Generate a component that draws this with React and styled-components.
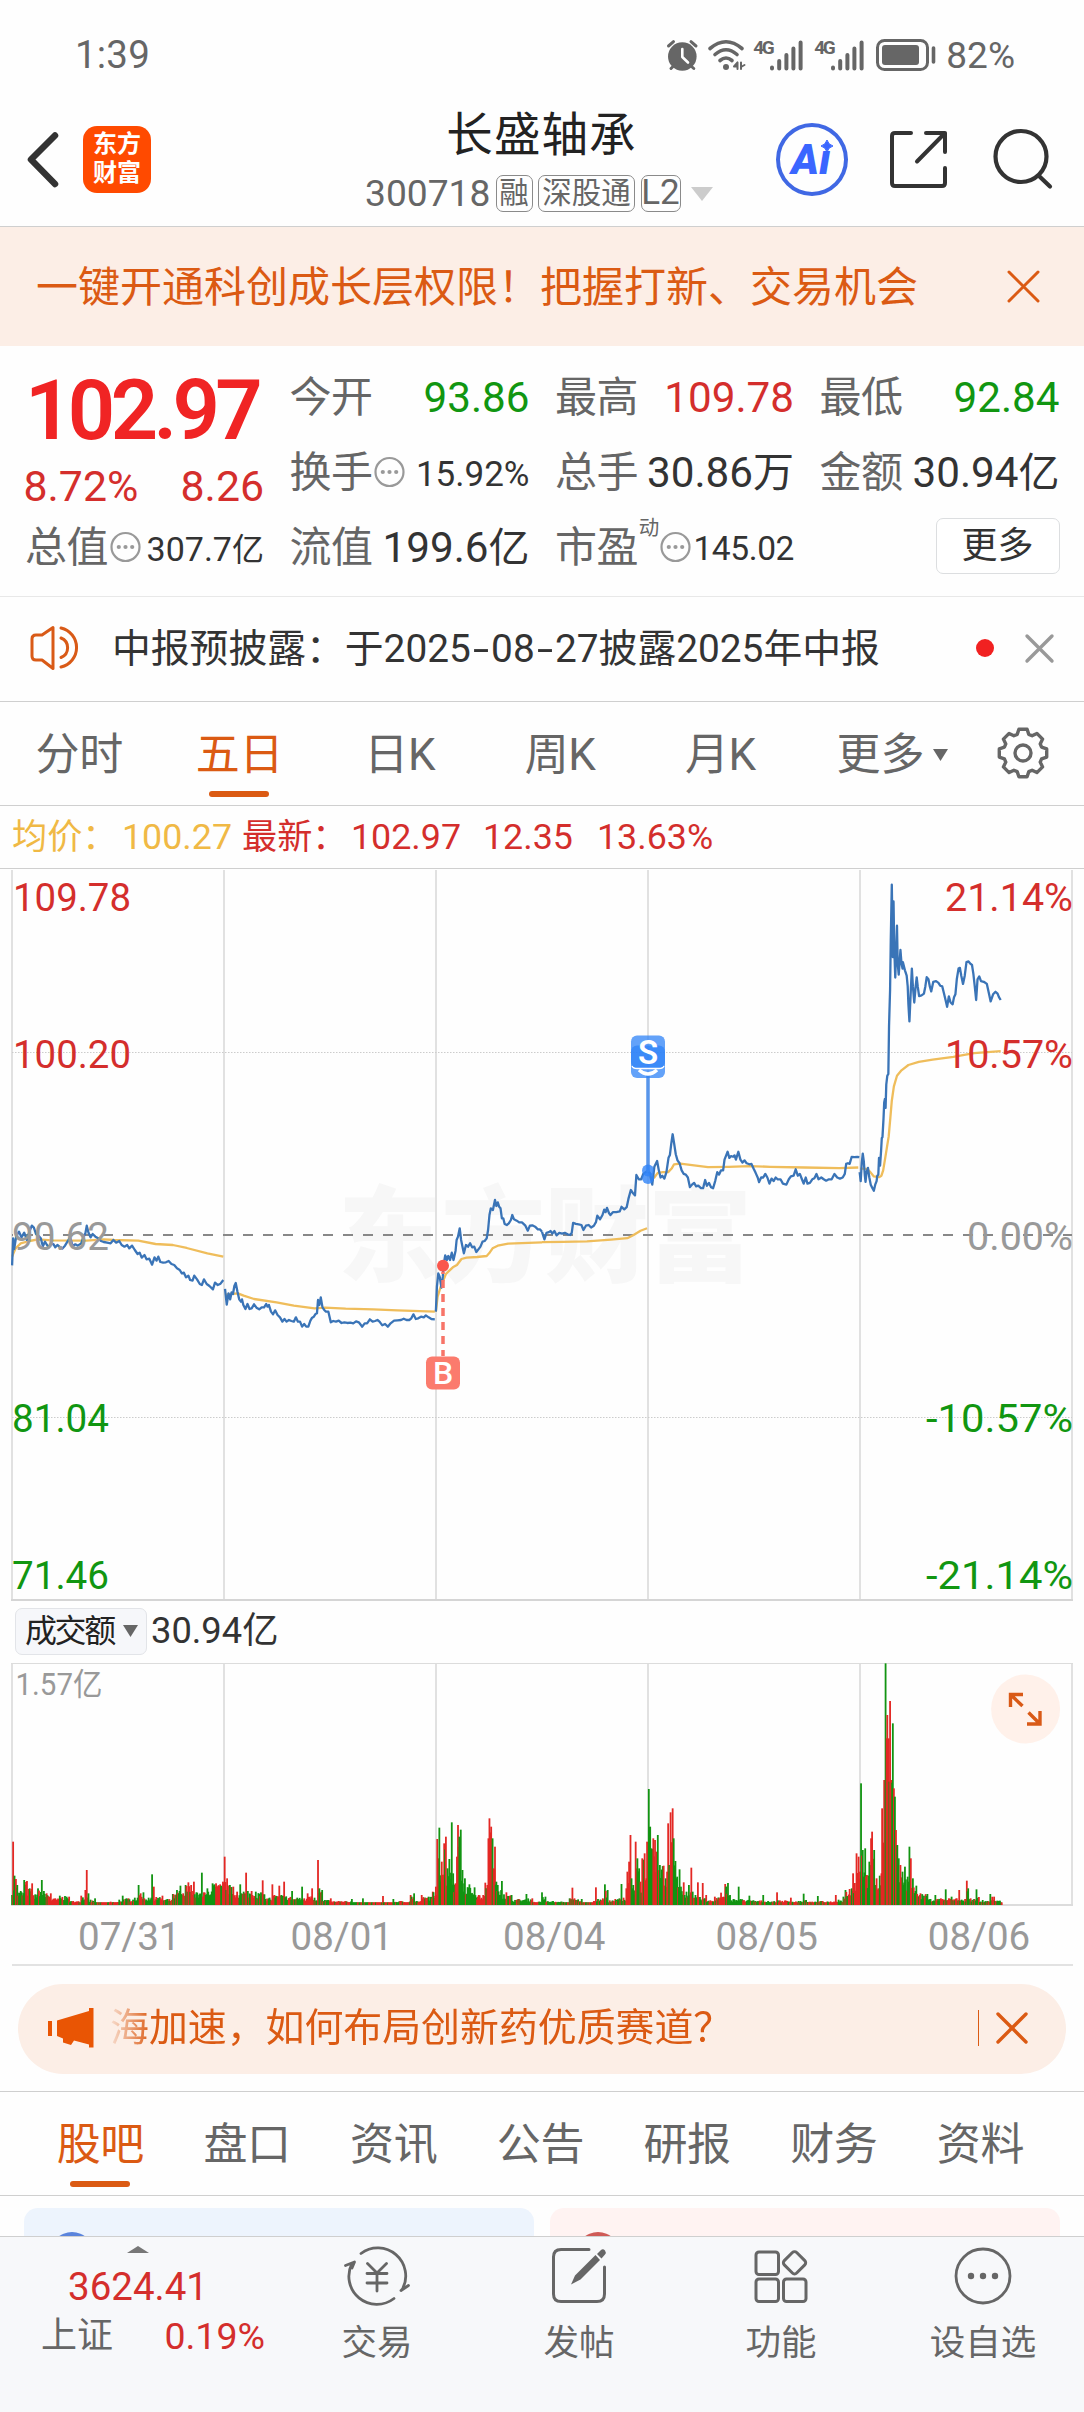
import React from "react";
import styled, { createGlobalStyle } from "styled-components";

const FONT = `Roboto, "Noto Sans CJK SC", sans-serif`;
const RED = "#d42e2c";
const GREEN = "#119611";
const ORANGE = "#db5a13";
const GRAY = "#666";

const Global = createGlobalStyle`
  * { box-sizing: border-box; }
  body { margin: 0; background: #fff; }
`;

const Page = styled.div`
  width: 1084px;
  height: 2412px;
  overflow: hidden;
  display: flex;
  flex-direction: column;
  background: #fefefe;
  font-family: ${FONT};
  color: #333;
  line-height: 1;
  white-space: nowrap;
`;

const Icon = styled.svg`
  display: block;
  flex: none;
  overflow: visible;
  fill: none;
  stroke-linecap: round;
  stroke-linejoin: round;
`;

/* ---------- status bar ---------- */
const StatusBar = styled.div`
  height: 72px;
  flex: none;
  display: flex;
  align-items: center;
  justify-content: space-between;
  padding: 38px 69px 0 75px;
  color: ${GRAY};
  font-size: 38.5px;
`;
const StatusIcons = styled.div`
  display: flex;
  align-items: center;
`;
const Clock = styled.span`
  letter-spacing: 0.2px;
`;
const Percent = styled.span`
  font-size: 37px;
  margin-left: 10px;
`;
const Network = styled.div`
  display: flex;
  align-items: flex-start;
  height: 30px;
  margin-left: ${(p) => p.$gap}px;
`;
const NetLabel = styled.span`
  font-size: 19px;
  font-weight: 700;
  width: 17px;
  letter-spacing: -2.4px;
  transform: translateY(-2px);
`;

/* ---------- header ---------- */
const Header = styled.header`
  height: 155px;
  flex: none;
  display: flex;
  align-items: flex-start;
  border-bottom: 1px solid #cfcfcf;
`;
const BackBox = styled.div`
  padding: 60px 0 0 27px;
`;
const Logo = styled.div`
  width: 68px;
  height: 67px;
  margin: 54px 0 0 24px;
  border-radius: 14px;
  background: #ff4a00;
  color: #fff;
  font-size: 24px;
  line-height: 29px;
  font-weight: 700;
  text-align: center;
  padding-top: 4px;
`;
const TitleBlock = styled.div`
  width: 353px;
  margin-left: 214px;
  padding-top: 37px;
  display: flex;
  flex-direction: column;
  align-items: center;
`;
const Title = styled.div`
  font-size: 46.5px;
  line-height: 52px;
  letter-spacing: 1.1px;
  font-weight: 400;
  color: #222;
`;
const SubTitle = styled.div`
  display: flex;
  align-items: center;
  height: 37px;
  margin-top: 14px;
  width: 353px;
  color: ${GRAY};
  font-size: 37.2px;
`;
const Code = styled.span`
  width: 130.5px;
`;
const Tag = styled.span`
  height: 37px;
  width: ${(p) => p.$w}px;
  margin-right: 5.5px;
  border: 1.5px solid #8a8a8a;
  border-radius: 7px;
  font-size: ${(p) => p.$size || 29.5}px;
  line-height: 34px;
  display: flex;
  justify-content: center;
`;
const CaretSlot = styled.span`
  margin-left: 5px;
`;
const HeaderIcons = styled.div`
  display: flex;
  margin: 51px 0 0 58px;
  align-items: flex-start;
`;
const AiBadge = styled.div`
  width: 72px;
  height: 73px;
  border: 4px solid #4068e4;
  border-radius: 50%;
  position: relative;
  display: flex;
  align-items: baseline;
  justify-content: center;
  color: #3a66ff;
  font-family: Roboto, sans-serif;
  font-style: italic;
  font-weight: 900;
  font-size: 42px;
  line-height: 66px;
  padding-right: 2px;
`;
const Spark = styled.svg`
  position: absolute;
  left: 41px;
  top: 13px;
`;

/* ---------- banner ---------- */
const Banner = styled.div`
  height: 119px;
  flex: none;
  display: flex;
  align-items: center;
  justify-content: space-between;
  padding: 0 44px 0 36px;
  background: #fceee6;
  color: ${ORANGE};
  font-size: 42px;
`;
const BannerText = styled.span`
  padding-top: 3px;
`;

/* ---------- quote ---------- */
const Quote = styled.section`
  height: 251px;
  flex: none;
  display: grid;
  grid-template-columns: 239px 240px 239px 240px;
  column-gap: 25.5px;
  padding: 13px 23px 0 25px;
  border-bottom: 1px solid #e8e8e8;
`;
const Column = styled.div`
  display: flex;
  flex-direction: column;
`;
const Price = styled.div`
  height: 100px;
  line-height: 104px;
  font-size: 83px;
  font-weight: 600;
  letter-spacing: -4.6px;
  color: #f02424;
`;
const ChangeRow = styled.div`
  height: 50px;
  line-height: 54px;
  display: flex;
  justify-content: space-between;
  font-size: 42.8px;
  margin-left: -1.5px;
  color: ${RED};
`;
const Cell = styled.div`
  height: 75px;
  padding-top: 3px;
  display: flex;
  align-items: center;
`;
const Label = styled.span`
  font-size: 42px;
  letter-spacing: -0.6px;
  color: ${GRAY};
`;
const Value = styled.span`
  margin-left: auto;
  font-size: ${(p) => (p.$small ? p.$size || 34 : 42.2)}px;
  letter-spacing: ${(p) => p.$ls || 0}px;
  padding-top: ${(p) => (p.$small ? 2 : 1)}px;
  color: ${(p) => p.$color || "#333"};
`;
const Unit = styled.span`
  font-size: ${(p) => p.$size}px;
  letter-spacing: 0;
`;
const Sup = styled.span`
  font-size: 20.5px;
  color: ${GRAY};
  align-self: flex-start;
  margin: 6px -1px 0 1px;
`;
const MoreButton = styled.button`
  margin: 9px 0 0 auto;
  width: 124px;
  height: 56px;
  border: 1.5px solid #dcdee0;
  border-radius: 7px;
  background: #fff;
  color: #333;
  font: 36px/48px ${FONT};
  padding: 0 0 1px;
`;

/* ---------- notice ---------- */
const Notice = styled.div`
  height: 105px;
  flex: none;
  display: flex;
  align-items: center;
  padding: 0 30px 2px 30px;
  border-bottom: 1px solid #cfcfcf;
  font-size: 38.8px;
`;
const NoticeText = styled.span`
  margin-left: 31px;
  padding-top: 2px;
`;
const Dash = styled.span`
  display: inline-block;
  width: 20.3px;
  text-align: center;
  transform: scaleX(1.5);
`;
const RedDot = styled.span`
  width: 18px;
  height: 18px;
  margin-left: auto;
  margin-right: 31px;
  border-radius: 50%;
  background: #f12121;
`;

/* ---------- tabs ---------- */
const PeriodTabs = styled.nav`
  height: 104px;
  flex: none;
  display: flex;
  border-bottom: 1px solid #cfcfcf;
`;
const SectionTabs = styled(PeriodTabs)`
  padding: 0 28px 0 28px;
`;
const Tab = styled.div`
  width: ${(p) => p.$w || 160.3}px;
  flex: none;
  display: flex;
  flex-direction: column;
  align-items: center;
  padding-top: 31px;
  font-size: 44px;
  line-height: 44px;
  letter-spacing: -0.4px;
  color: ${(p) => (p.$active ? ORANGE : GRAY)};
  &:first-child { margin-left: -1px; }
`;
const Underline = styled.span`
  width: 60px;
  height: 6px;
  margin-top: 14px;
  border-radius: 3px;
  background: ${ORANGE};
`;
const MoreTab = styled.div`
  width: 198px;
  display: flex;
  align-items: center;
  gap: 9px;
  padding: 2px 0 0 36px;
  font-size: 44px;
  color: ${GRAY};
`;

/* ---------- legend ---------- */
const Legend = styled.div`
  height: 63px;
  flex: none;
  display: flex;
  align-items: center;
  padding: 2px 0 0 12px;
  border-bottom: 1px solid #cfcfcf;
`;
const LegendItem = styled.span`
  width: ${(p) => p.$w}px;
  color: ${(p) => p.$color || RED};
  font-size: ${(p) => p.$size || 35.8}px;
`;

/* ---------- charts ---------- */
const Chart = styled.svg`
  display: block;
  flex: none;
  font-family: ${FONT};
`;
const VolumeHeader = styled.div`
  height: 62px;
  flex: none;
  display: flex;
  align-items: center;
  padding: 0 0 1px 15px;
  font-size: 36.3px;
`;
const Chip = styled.div`
  width: 132px;
  height: 47px;
  margin-right: 4px;
  display: flex;
  align-items: center;
  justify-content: space-between;
  padding: 0 8px 1px 9px;
  border: 1px solid #e2e4e8;
  border-radius: 7px;
  background: #f6f7fa;
  color: #222;
  font-size: 32px;
  letter-spacing: -2.4px;
`;
const Dates = styled.div`
  height: 60px;
  flex: none;
  margin: 0 11px 0 12px;
  padding-left: 11px;
  display: flex;
  border-bottom: 2px solid #e2e2e2;
  color: #999;
  font-size: 38.5px;
`;
const DateLabel = styled.span`
  width: 212.5px;
  flex: none;
  text-align: center;
  line-height: 61px;
  &:last-child { width: 212px; }
`;

/* ---------- promo ---------- */
const PromoArea = styled.div`
  height: 126px;
  flex: none;
  padding: 18px 18px 0;
  border-bottom: 1px solid #cfcfcf;
`;
const Promo = styled.div`
  height: 90px;
  border-radius: 45px;
  background: #fceee6;
  display: flex;
  align-items: center;
  padding: 0 38px 2px 30px;
  color: ${ORANGE};
  font-size: 38.9px;
`;
const Marquee = styled.span`
  margin-left: 16px;
  padding-top: 1px;
  -webkit-mask-image: linear-gradient(90deg, rgba(0, 0, 0, 0.1), #000 42px);
  mask-image: linear-gradient(90deg, rgba(0, 0, 0, 0.1), #000 42px);
`;
const Divider = styled.span`
  width: 1.5px;
  height: 36px;
  margin-left: auto;
  margin-right: 17px;
  background: ${ORANGE};
`;

/* ---------- cards ---------- */
const Cards = styled.div`
  height: 40px;
  flex: none;
  display: flex;
  gap: 16px;
  padding: 12px 24px 0;
  overflow: hidden;
`;
const Card = styled.div`
  width: 510px;
  height: 100px;
  border-radius: 14px;
  background: ${(p) => p.$bg};
  padding: 24px 0 0 26px;
  display: flex;
  align-items: flex-start;
`;
const Face = styled.span`
  width: 44px;
  height: 44px;
  border-radius: 50%;
  background: ${(p) => p.$bg};
`;

/* ---------- bottom bar ---------- */
const BottomBar = styled.footer`
  height: 176px;
  flex: none;
  display: flex;
  background: #f7f8fa;
  border-top: 1px solid #cfcfcf;
  color: ${GRAY};
`;
const IndexBox = styled.div`
  width: 276px;
  display: flex;
  flex-direction: column;
  align-items: center;
  padding-top: 9px;
`;
const IndexValue = styled.div`
  margin-top: 15px;
  font-size: 38.5px;
  line-height: 38px;
  color: ${RED};
`;
const IndexRow = styled.div`
  margin: 10px 0 0 41px;
  width: 224px;
  align-self: flex-start;
  display: flex;
  justify-content: space-between;
  align-items: center;
  font-size: 36px;
  line-height: 40px;
`;
const IndexPct = styled.span`
  color: ${RED};
  font-size: 37.5px;
`;
const Action = styled.div`
  width: 202px;
  display: flex;
  flex-direction: column;
  align-items: center;
  padding-top: 9px;
  font-size: 35.5px;
  line-height: 36px;
`;
const ActionLabel = styled.span`
  margin-top: 19px;
`;

/* ---------- icons ---------- */
const Cross = ({ size, color, w }) => (
  <Icon width={size} height={size} viewBox={`0 0 ${size} ${size}`} stroke={color} strokeWidth={w}>
    <path d={`M2 2L${size - 2} ${size - 2}M${size - 2} 2L2 ${size - 2}`} />
  </Icon>
);
const InfoIcon = styled(Icon)`
  margin-left: 2px;
`;
const Info = () => (
  <InfoIcon width="31" height="31" viewBox="0 0 31 31" stroke="#999" strokeWidth="2.2">
    <circle cx="15.5" cy="14" r="14" />
    <g fill="#999" stroke="none">
      <circle cx="8.8" cy="14" r="2.1" />
      <circle cx="15.5" cy="14" r="2.1" />
      <circle cx="22.2" cy="14" r="2.1" />
    </g>
  </InfoIcon>
);
const Signal = () => (
  <Icon width="33" height="31" viewBox="0 0 33 31" stroke="#666" strokeWidth="4">
    <path d="M2 27.5V28.5M9.2 21V28.5M16.4 15V28.5M23.4 8.5V28.5M30.6 2.5V28.5" />
  </Icon>
);
const Caret = ({ w, h, color, up }) => (
  <Icon width={w} height={h} viewBox="0 0 10 10" preserveAspectRatio="none">
    <path fill={color} d={up ? "M0 10L5 0L10 10Z" : "M0 0H10L5 10Z"} />
  </Icon>
);

const WifiIcon = styled(Icon)`
  margin-left: 9px;
`;
const BatteryIcon = styled(Icon)`
  margin-left: 12px;
`;
const ShareIcon = styled(Icon)`
  margin: 8px 0 0 42px;
`;
const SearchIcon = styled(Icon)`
  margin: 6px 0 0 45px;
`;
const GearIcon = styled(Icon)`
  margin-top: 26px;
`;

const gearPath = (() => {
  const pts = [];
  for (let i = 0; i < 8; i++) {
    const a = (i * Math.PI) / 4;
    [[-0.3, 19.5], [-0.17, 24], [0.17, 24], [0.3, 19.5]].forEach(([d, r]) => {
      pts.push(`${(25 + r * Math.sin(a + d)).toFixed(1)} ${(25 - r * Math.cos(a + d)).toFixed(1)}`);
    });
  }
  return `M${pts.join("L")}Z`;
})();

/* ---------- chart data ---------- */
const priceLeft = [
  "35,406 38,325 41,357 47,318 55,305 62,322 70,308 78,330 85,305 92,287 98,293 104,312 112,318 118,325 124,349 130,335 136,345 141,352 148,340 155,343 160,352 166,345 172,350 180,356 188,347 195,335 203,322 210,348 218,343 225,347 235,340 240,325 247,310 251,287 256,308 262,322 268,312 276,320 284,325 292,333 300,336 310,338 320,340 328,330 336,338 345,333 352,345 360,350 368,345 374,355 382,347 390,360 398,372 404,368 410,383 418,375 424,388 432,386 440,404 447,382 453,392 458,380 464,396 472,398 480,397 488,393 496,402 504,405 512,415 520,420 526,430 532,428 538,442 545,437 550,450 557,452 562,437 570,448 578,462 584,465 590,448 598,462 606,468 616,478 622,458 630,465 638,461 646,450",
  "651,477 656,524 661,490 666,508 670,487 674,492 678,468 682,459 687,485 692,508 697,515 700,508 704,525 710,537 716,522 722,537 728,535 735,523 742,533 750,538 757,532 764,532 770,522 774,530 778,525 784,545 790,553 796,541 803,555 810,562 817,575 823,567 829,575 836,570 843,573 850,575 856,562 862,575 868,575 874,590 880,582 886,590 892,590 898,572 903,563 908,560 913,552 917,550 920,510 924,525 928,502 933,532 938,540 943,545 950,545 957,577 964,573 972,575 980,572 988,579 996,577 1005,579 1014,578 1022,580 1030,574 1038,577 1048,590 1055,580 1062,580 1070,568 1078,575 1085,573 1092,570 1098,575 1106,586 1114,582 1122,590 1130,580 1140,572 1150,571 1160,570 1168,566 1176,570 1184,570 1190,565 1196,553 1203,567 1210,565 1218,560 1226,562 1232,556 1240,562 1248,567 1258,568",
  "1261,545 1264,470 1268,430 1272,440 1277,473 1281,440 1284,400 1288,376 1293,390 1297,378 1302,390 1307,368 1312,390 1318,362 1321,330 1325,320 1330,295 1334,330 1338,350 1342,370 1348,345 1354,350 1360,340 1366,352 1372,350 1378,366 1384,358 1390,350 1396,335 1402,333 1408,325 1412,300 1416,255 1420,235 1426,240 1432,210 1436,228 1440,217 1444,230 1448,235 1452,265 1456,265 1460,282 1466,285 1472,280 1478,270 1482,255 1487,268 1495,272 1502,277 1510,277 1520,287 1527,302 1533,287 1540,286 1548,290 1556,298 1562,298 1568,305",
];
const priceRight = [
  "0,1097 7,1118 13,1100 20,1098 25,1095 30,1102 36,1095 42,1107 50,1100 58,1102 66,1100 74,1104 82,1106 86,1100 90,1072 98,1075 106,1076 114,1078 120,1092 127,1080 135,1078 142,1085 150,1080 156,1070 160,1052 168,1062 175,1050 180,1035 184,1042 188,1030 194,1045 198,1050 205,1042 215,1042 225,1040 230,1027 238,1034 245,1028 250,1005 257,980 264,990 269,995 273,938 280,950 287,950 293,935 300,930 307,925 313,935 319,965 325,915 333,899 338,925 343,945 348,940 354,948 360,930 366,890 370,882 374,850 378,824 382,848 387,880 392,897 398,905 404,925 410,935 416,937 422,945 428,972 434,965 440,960 446,970 452,968 460,975 466,975 472,952 477,968 483,960 489,972 495,975 501,955 507,930 512,937 518,925 524,925 528,895 532,885 537,873 542,890 547,885 553,887 557,883 561,895 568,873 574,895 580,903 586,897 592,905 600,908 606,907 612,920 618,932 624,945 628,958 634,945 640,945 646,935 652,945 658,962 664,948 670,955 676,945 682,950 690,950 697,962 707,965 714,950 720,942 728,940 734,922 740,940 746,935 752,950 757,962 763,945 768,962 775,960 782,950 788,947 794,935 800,950 808,945 815,950 822,954 830,950 838,950 846,935 854,945 862,948 870,945 876,935 880,907 885,905 890,907 896,887 904,888 912,887 918,888",
  "919,930 922,955 925,905 928,878 931,900 934,940 936,957 939,930 943,918 947,945 951,965 956,975 960,982 964,965 968,955 970,940 973,937 975,890 978,912 981,870 983,835 985,832 988,780 990,735 992,725 994,750 996,685 999,660 1002,655 1004,520 1007,420 1009,280 1012,125 1015,328 1017,172 1019,300 1022,385 1025,300 1027,240 1029,345 1032,377 1037,308 1040,345 1043,360 1044,342 1050,365 1055,380 1058,410 1060,460 1063,508 1067,420 1070,360 1073,410 1077,455 1081,410 1084,385 1087,410 1091,437 1098,435 1105,430 1109,410 1113,384 1118,390 1122,410 1126,424 1132,397 1140,395 1147,400 1152,408 1158,410 1163,430 1168,450 1172,467 1177,438 1182,455 1188,460 1192,440 1196,432 1200,390 1205,360 1209,358 1213,380 1218,403 1223,380 1228,342 1234,340 1240,347 1244,350 1248,375 1252,410 1256,448 1260,390 1265,382 1270,395 1278,397 1287,403 1293,430 1298,452 1305,432 1312,425 1318,430 1322,440 1327,448",
];
const avgLeft = [
  "35,380 45,355 60,340 85,333 110,328 150,331 250,332 300,328 330,330 400,332 450,342 500,345 540,354 600,370 646,380",
  "651,495 668,492 688,490 705,497 735,507 800,517 850,527 910,535 940,533 1000,536 1080,538 1150,541 1258,545",
  "1261,545 1266,500 1275,470 1283,450 1290,432 1300,422 1310,412 1322,405 1335,387 1350,383 1380,381 1408,378 1415,370 1425,355 1440,347 1470,341 1568,337",
];
const avgRight = [
  "0,1126 60,1125 130,1124 200,1119 247,1115 265,1106 285,1094 304,1087",
  "309,930 315,950 325,945 335,932 350,930 365,930 375,920 382,908 400,906 440,911 480,916 540,915 600,913 660,915 760,917 860,919 915,917",
  "920,920 940,921 950,930 960,942 975,944 982,940 987,925 993,890 1003,830 1008,775 1012,730 1018,690 1027,660 1040,645 1060,630 1090,621 1130,615 1190,607 1250,597 1327,591",
];

// Turnover anchors: position:height, followed by r (rise) or g (fall)
const turnover = `35:30g 38:190r 42:88g 46:78r 50:60g 60:42g 70:75g 78:72r 86:50g 93:65r 102:32g 110:50g 121:75g 127:42g 135:35r 147:35r 160:20r 173:28g 188:27g 200:25r 212:12r 235:28r 247:45r 251:105r 256:35g 262:16g 275:20g 290:8r 320:10r 345:16g 355:28g 372:20r 390:22g 401:60g 407:35r 415:38g 430:22g 440:92g 445:55r 452:24r 470:28r 485:18g 500:33g 512:45g 522:58g 530:35r 537:60g 545:68r 553:60r 561:70r 568:38g 584:97g 590:38r 600:50g 615:65g 625:65r 637:62r 645:70r 650:145r 657:80r 665:60g 675:55r 686:40r 695:62g 705:40g 712:97r 717:42g 728:42r 740:40g 755:38g 760:74r 765:32g 780:22g 788:62r 794:30r 808:58r 814:30g 822:70r 828:26g 845:42g 860:22g 874:55g 880:20r 890:35r 903:50r 910:22g 920:135r 924:50g 932:45g 940:15g 957:20r 980:12r 1018:18g 1035:8r 1050:20g 1080:8r 1108:27r 1120:8r 1138:18g 1160:12r 1188:30r 1198:35g 1205:12g 1220:30r 1240:25g 1252:40r 1261:55r 1265:198r 1268:140r 1271:232g 1278:130r 1285:185r 1290:205r 1295:110g 1300:138g 1307:248g 1311:95g 1318:65r 1322:145r 1325:240r 1329:205g 1333:226g 1338:105g 1345:80g 1358:62g 1373:53g 1385:30r 1398:30r 1404:67r 1410:60r 1413:200r 1416:260r 1421:235r 1425:200g 1428:110r 1432:175r 1436:70g 1440:60g 1452:72g 1458:32g 1465:38r 1480:30g 1500:18g 1523:33g 1540:20r 1560:10g 1568:38g 1578:25g 1600:12g 1625:10g 1648:20g 1656:52r 1662:20r 1683:18g 1700:8r 1718:12r 1724:53r 1730:18g 1744:20r 1750:62g 1758:45g 1764:14r 1780:18r 1792:20g 1798:63g 1804:22r 1812:50r 1815:100r 1820:130r 1824:210r 1827:80g 1832:60g 1839:190r 1844:140g 1849:110g 1853:70r 1858:140r 1865:155r 1870:80r 1872:190r 1877:348g 1881:235g 1885:170g 1890:200r 1895:195r 1900:160r 1903:210g 1909:120g 1920:118r 1926:80g 1930:100r 1933:245r 1936:120g 1940:278r 1946:290r 1949:200g 1954:132g 1959:85g 1966:107g 1970:55g 1978:68r 1986:40g 1993:60g 1998:38r 2000:112r 2004:40g 2012:30g 2019:68r 2025:24g 2033:66r 2038:20g 2043:30r 2055:14r 2068:25r 2086:37r 2093:25r 2098:63r 2106:66g 2112:30g 2122:18g 2137:55g 2142:18g 2168:28g 2180:14g 2208:30g 2222:12g 2248:38r 2256:14r 2288:22r 2310:12g 2325:34g 2332:15g 2350:10r 2366:27g 2380:12r 2418:30r 2426:16g 2440:25g 2446:45g 2458:48r 2464:50g 2468:95r 2473:66r 2478:155r 2484:145r 2488:100r 2491:365g 2496:165g 2503:170g 2508:90r 2515:130g 2520:200r 2523:220r 2529:165g 2532:60g 2536:80r 2541:50r 2545:88g 2550:95r 2552:290r 2558:375r 2562:725g 2565:500r 2567:570r 2571:500r 2575:612r 2579:375r 2583:545g 2586:350r 2589:325g 2592:225r 2596:180g 2600:140g 2605:120r 2611:100g 2618:115g 2626:85g 2629:70g 2631:175g 2635:140r 2641:80g 2651:58g 2663:35r 2683:33g 2692:18g 2706:30g 2722:20r 2736:47g 2745:20r 2753:25g 2768:20r 2775:45r 2782:16g 2792:18r 2797:73r 2801:50g 2808:20r 2818:18g 2825:47g 2832:24r 2843:15g 2857:12g 2865:33g 2876:25r 2885:13g 2893:13g 2898:8r`
  .split(" ")
  .map((s) => {
    const m = s.match(/^(\d+):(\d+)([rg])$/);
    return [+m[1], +m[2], m[3]];
  });

const bars = (() => {
  let seed = 7;
  const rnd = () => {
    seed = (seed * 16807) % 2147483647;
    return seed / 2147483647;
  };
  const out = [];
  for (let i = 0; i < turnover.length; i++) {
    const [x, h, c] = turnover[i];
    out.push([x, h, c]);
    const next = turnover[i + 1];
    if (!next) break;
    const low = Math.min(h, next[1]);
    const n = Math.round((next[0] - x) / 2.5);
    for (let k = 1; k < n; k++) {
      out.push([x + (k * (next[0] - x)) / n, Math.max(8, low * (0.5 + 0.5 * rnd())), rnd() < 0.7 ? c : next[2] === c ? (c === "r" ? "g" : "r") : next[2]]);
    }
  }
  return out;
})();

const gridX = [12, 224, 436, 648, 860, 1072];

const SeriesLine = ({ sets, left, color }) => (
  <g
    transform={left ? "translate(0 1130) scale(0.34566 0.33333)" : "translate(542 840) scale(0.34566 0.35714)"}
    fill="none"
    stroke={color}
    strokeWidth="2.3"
    strokeLinejoin="round"
  >
    {sets.map((p) => (
      <polyline key={p.slice(0, 12)} points={p} vectorEffect="non-scaling-stroke" />
    ))}
  </g>
);

const AxisText = ({ x, y, color, anchor, len, children }) => (
  <text x={x} y={y + 14} fill={color} fontSize="39.5" textAnchor={anchor || "start"} textLength={len} lengthAdjust="spacingAndGlyphs">
    {children}
  </text>
);

const PriceChart = () => (
  <Chart width="1084" height="732" viewBox="0 869 1084 732">
    <text x="338" y="1274" fontSize="104" fontWeight="900" fill="#f7f7f7" textLength="414">
      东方财富
    </text>
    <g stroke="#e1e1e1" strokeWidth="2">
      {gridX.map((x) => (
        <path key={x} d={`M${x} 870V1600`} />
      ))}
    </g>
    <path d="M11 1600H1073" stroke="#d5d5d5" strokeWidth="2" />
    <path d="M12 1052.5H1072M12 1417.5H1072" stroke="#ccc" strokeWidth="1" strokeDasharray="1.5 1.5" />
    <path d="M12 1235H1072" stroke="#888" strokeWidth="2" strokeDasharray="10 10" strokeDashoffset="9" />
    <SeriesLine sets={avgLeft} left color="#efbd5b" />
    <SeriesLine sets={avgRight} color="#efbd5b" />
    <SeriesLine sets={priceLeft} left color="#3a74b7" />
    <SeriesLine sets={priceRight} color="#3a74b7" />

    <path d="M443 1272V1356" stroke="#f77468" strokeWidth="3.5" strokeDasharray="8 6" strokeDashoffset="-8" />
    <circle cx="443" cy="1265.7" r="6" fill="#fa564c" />
    <rect x="426" y="1356.5" width="34" height="33" rx="6" fill="#fb7b6d" />
    <text x="443" y="1384" fontSize="32" fontWeight="500" fill="#fff" textAnchor="middle">B</text>

    <path d="M648 1074V1172" stroke="#5795ea" strokeWidth="3.5" />
    <circle cx="648" cy="1170.5" r="6" fill="#2f83f7" fillOpacity="0.8" />
    <circle cx="648" cy="1178" r="6" fill="#2f83f7" fillOpacity="0.8" />
    <rect x="631" y="1045.5" width="34" height="32.5" rx="6" fill="#2f83f7" fillOpacity="0.75" />
    <path d="M639 1070Q648 1078 657 1070" stroke="#fff" strokeWidth="3.5" fill="none" />
    <rect x="631" y="1035.5" width="34" height="32.5" rx="6" fill="#2f83f7" fillOpacity="0.75" />
    <path d="M632 1066Q633 1068.5 637 1068.5H659Q663 1068.5 664 1066" stroke="#fff" strokeWidth="1.3" fill="none" />
    <text x="648" y="1063.5" fontSize="33" fontWeight="600" fill="#fff" textAnchor="middle">S</text>

    <AxisText x="13" y={896.7} color={RED} len="118">109.78</AxisText>
    <AxisText x="13" y={1053.7} color={RED} len="118">100.20</AxisText>
    <AxisText x="12" y={1235.7} color="#999" len="97">90.62</AxisText>
    <AxisText x="12" y={1418} color={GREEN} len="97">81.04</AxisText>
    <AxisText x="12" y={1574.5} color={GREEN} len="97">71.46</AxisText>
    <AxisText x="1073" y={897} color={RED} anchor="end" len="128">21.14%</AxisText>
    <AxisText x="1073" y={1053.7} color={RED} anchor="end" len="128">10.57%</AxisText>
    <AxisText x="1073" y={1235.7} color="#999" anchor="end" len="106">0.00%</AxisText>
    <AxisText x="1073" y={1418} color={GREEN} anchor="end" len="147">-10.57%</AxisText>
    <AxisText x="1073" y={1574.5} color={GREEN} anchor="end" len="147">-21.14%</AxisText>
  </Chart>
);

const VolumeChart = () => (
  <Chart width="1084" height="243" viewBox="0 1663 1084 243">
    <g stroke="#e1e1e1" strokeWidth="2">
      {gridX.map((x) => (
        <path key={x} d={`M${x} 1663V1905`} />
      ))}
    </g>
    <path d="M11 1663.5H1073" stroke="#dcdcdc" strokeWidth="1" />
    <path d="M11 1905H1073" stroke="#dcdcdc" strokeWidth="2" />
    <text x="15.5" y="1695" fontSize="31" fill="#999" textLength="87" lengthAdjust="spacingAndGlyphs">1.57亿</text>
    {bars.map(([x, h, c], i) => (
      <rect key={i} x={x / 2.893 - 0.9} y={1905 - h / 3} width="1.8" height={h / 3} fill={c === "r" ? "#e32824" : "#129412"} />
    ))}
    <circle cx="1025.6" cy="1709" r="34.5" fill="#fff1ea" />
    <path
      d="M1010.5 1707V1694.5H1023M1010.5 1694.5L1022.5 1706M1040 1711V1724H1027M1040 1724L1028.5 1712.5"
      stroke="#d95a17"
      strokeWidth="3.4"
      fill="none"
    />
  </Chart>
);

const sections = ["股吧", "盘口", "资讯", "公告", "研报", "财务", "资料"];
const periods = ["分时", "五日", "日K", "周K", "月K"];
const dates = ["07/31", "08/01", "08/04", "08/05", "08/06"];

export default function App() {
  return (
    <Page>
      <Global />
      <StatusBar>
        <Clock>1:39</Clock>
        <StatusIcons>
          <Icon width="33" height="31" viewBox="0 0 33 31" stroke="#666" strokeWidth="3">
            <circle cx="16.3" cy="16.5" r="14.3" fill="#666" stroke="none" />
            <path d="M2.5 6L7.5 1.7M30 6L25 1.7M5 28.5L7.5 26M27.8 28.5L25 26" />
            <path d="M16.3 9V17L22 22.5" stroke="#fff" strokeWidth="2.6" />
          </Icon>
          <WifiIcon width="38" height="31" viewBox="0 0 38 31" stroke="#666" strokeWidth="3.6">
            <path d="M2 8.5Q18 -5 34 8.5M7 14.5Q18 5 29 14.5M12 20.5Q18 15.5 24 20.5" />
            <circle cx="18" cy="27" r="3" fill="#666" stroke="none" />
            <path d="M29.5 22.5V29M29.5 22.5L26 26.5H29M33 29V22.5M33 27L36.5 25" strokeWidth="2" />
          </WifiIcon>
          <Network $gap={7}>
            <NetLabel>4G</NetLabel>
            <Signal />
          </Network>
          <Network $gap={11}>
            <NetLabel>4G</NetLabel>
            <Signal />
          </Network>
          <BatteryIcon width="60" height="32" viewBox="0 0 60 32" stroke="#666" strokeWidth="3">
            <rect x="1.5" y="1.5" width="50" height="29" rx="7" />
            <rect x="6" y="6" width="37" height="20" rx="3" fill="#666" stroke="none" />
            <path d="M57.5 9V23" strokeWidth="3.6" />
          </BatteryIcon>
          <Percent>82%</Percent>
        </StatusIcons>
      </StatusBar>

      <Header>
        <BackBox>
          <Icon width="32" height="56" viewBox="0 0 32 56" stroke="#333" strokeWidth="6.5">
            <path d="M28 3.5L4 27.5L28 52" />
          </Icon>
        </BackBox>
        <Logo>
          东方
          <br />
          财富
        </Logo>
        <TitleBlock>
          <Title>长盛轴承</Title>
          <SubTitle>
            <Code>300718</Code>
            <Tag $w={37}>融</Tag>
            <Tag $w={97}>深股通</Tag>
            <Tag $w={40} $size={35}>L2</Tag>
            <CaretSlot>
              <Caret w={22} h={14} color="#ccc" />
            </CaretSlot>
          </SubTitle>
        </TitleBlock>
        <HeaderIcons>
          <AiBadge>
            Aı
            <Spark width="12" height="12" viewBox="0 0 12 12">
              <path d="M6 0Q7.3 4.7 12 6Q7.3 7.3 6 12Q4.7 7.3 0 6Q4.7 4.7 6 0Z" fill="#3a66ff" stroke="#3a66ff" />
            </Spark>
          </AiBadge>
          <ShareIcon width="58" height="58" viewBox="0 0 58 58" stroke="#333" strokeWidth="4">
            <path d="M21 2H5Q2 2 2 5V52Q2 55 5 55H52Q55 55 55 52V37M36 2H55V21M55 2L27 30.5" />
          </ShareIcon>
          <SearchIcon width="60" height="60" viewBox="0 0 60 60" stroke="#333" strokeWidth="4.2">
            <circle cx="28" cy="27.5" r="25.5" />
            <path d="M46 47L57 57.5" />
          </SearchIcon>
        </HeaderIcons>
      </Header>

      <Banner>
        <BannerText>一键开通科创成长层权限！把握打新、交易机会</BannerText>
        <Cross size={33} color={ORANGE} w={3} />
      </Banner>

      <Quote>
        <Column>
          <Price>102.97</Price>
          <ChangeRow>
            <span>8.72%</span>
            <span>8.26</span>
          </ChangeRow>
          <Cell>
            <Label>总值</Label>
            <Info />
            <Value $small>
              307.7<Unit $size={32}>亿</Unit>
            </Value>
          </Cell>
        </Column>
        <Column>
          <Cell>
            <Label>今开</Label>
            <Value $color={GREEN}>93.86</Value>
          </Cell>
          <Cell>
            <Label>换手</Label>
            <Info />
            <Value $small $size={35}>15.92%</Value>
          </Cell>
          <Cell>
            <Label>流值</Label>
            <Value>
              199.6<Unit $size={41}>亿</Unit>
            </Value>
          </Cell>
        </Column>
        <Column>
          <Cell>
            <Label>最高</Label>
            <Value $color={RED}>109.78</Value>
          </Cell>
          <Cell>
            <Label>总手</Label>
            <Value>
              30.86<Unit $size={41}>万</Unit>
            </Value>
          </Cell>
          <Cell>
            <Label>市盈</Label>
            <Sup>动</Sup>
            <Info />
            <Value $small $size={33.5} $ls={-0.4}>145.02</Value>
          </Cell>
        </Column>
        <Column>
          <Cell>
            <Label>最低</Label>
            <Value $color={GREEN}>92.84</Value>
          </Cell>
          <Cell>
            <Label>金额</Label>
            <Value>
              30.94<Unit $size={41}>亿</Unit>
            </Value>
          </Cell>
          <MoreButton>更多</MoreButton>
        </Column>
      </Quote>

      <Notice>
        <Icon width="51" height="44" viewBox="0 0 51 44" stroke="#d95a17" strokeWidth="3">
          <path d="M23 1.5V42.5L12 34H6Q2 34 2 30V13Q2 9 6 9H12ZM31 2A20 20 0 0 1 31 41M31 12A10.5 10.5 0 0 1 31 31.5" />
        </Icon>
        <NoticeText>
          中报预披露：于2025<Dash>-</Dash>08<Dash>-</Dash>27披露2025年中报
        </NoticeText>
        <RedDot />
        <Cross size={29} color="#999" w={3.4} />
      </Notice>

      <PeriodTabs>
        {periods.map((t, i) => (
          <Tab key={t} $active={i === 1}>
            {t}
            {i === 1 && <Underline />}
          </Tab>
        ))}
        <MoreTab>
          更多
          <Caret w={15} h={12} color="#666" />
        </MoreTab>
        <GearIcon width="50" height="50" viewBox="0 0 50 50" stroke="#666" strokeWidth="3.4">
          <path d={gearPath} />
          <circle cx="25" cy="25" r="8" />
        </GearIcon>
      </PeriodTabs>

      <Legend>
        <LegendItem $w={110} $color="#f0b945" $size={35.2}>均价：</LegendItem>
        <LegendItem $w={120} $color="#f0b945">100.27</LegendItem>
        <LegendItem $w={109} $size={35.2}>最新：</LegendItem>
        <LegendItem $w={132}>102.97</LegendItem>
        <LegendItem $w={114}>12.35</LegendItem>
        <LegendItem $w={120}>13.63%</LegendItem>
      </Legend>

      <PriceChart />

      <VolumeHeader>
        <Chip>
          成交额
          <Caret w={15} h={12} color="#666" />
        </Chip>
        <span>30.94亿</span>
      </VolumeHeader>
      <VolumeChart />
      <Dates>
        {dates.map((d) => (
          <DateLabel key={d}>{d}</DateLabel>
        ))}
      </Dates>

      <PromoArea>
        <Promo>
          <Icon width="46" height="40" viewBox="0 0 46 40">
            <path fill="#e95504" d="M0 13H4V28H0ZM9 12.5L41 3V0H45.5V39.5H41V36.5L26 32.5L23 37L15 34.5V30.5L9 28Z" />
          </Icon>
          <Marquee>海加速，如何布局创新药优质赛道？</Marquee>
          <Divider />
          <Cross size={32} color={ORANGE} w={3.4} />
        </Promo>
      </PromoArea>

      <SectionTabs>
        {sections.map((t, i) => (
          <Tab key={t} $w={146.7} $active={i === 0}>
            {t}
            {i === 0 && <Underline />}
          </Tab>
        ))}
      </SectionTabs>

      <Cards>
        <Card $bg="#edf4fd">
          <Face $bg="#5a84dc" />
        </Card>
        <Card $bg="#fff3f2">
          <Face $bg="#cf5a56" />
        </Card>
      </Cards>

      <BottomBar>
        <IndexBox>
          <Caret w={22} h={7} color="#777" up />
          <IndexValue>3624.41</IndexValue>
          <IndexRow>
            <span>上证</span>
            <IndexPct>0.19%</IndexPct>
          </IndexRow>
        </IndexBox>
        <Action>
          <Icon width="66" height="60" viewBox="0 0 66 60" stroke="#666" strokeWidth="2.8">
            <path d="M17 7.5A28 28 0 0 1 58.5 43M58.5 43L57 44.5L64.5 39.5M50 52.5A28 28 0 0 1 8 17.5M1.5 19.5L10.5 16L8 22" />
            <path d="M23.5 17.5L33 27L42.5 17.5M23 27.5H43M23 37H43M33 27V45" />
          </Icon>
          <ActionLabel>交易</ActionLabel>
        </Action>
        <Action>
          <Icon width="56" height="60" viewBox="0 0 56 60" stroke="#666" strokeWidth="3">
            <path d="M38 3.5H10Q2.5 3.5 2.5 11V48Q2.5 55.5 10 55.5H46Q53.500 55.5 53.5 48V21" />
            <path fill="#666" stroke="none" d="M20 38.5L24 29.5L44.5 9L49 14L29.5 33.5ZM46 8L50 4Q52 2.5 54 4.5Q55.5 6.5 54 8.5L50.5 12.5Z" />
          </Icon>
          <ActionLabel>发帖</ActionLabel>
        </Action>
        <Action>
          <Icon width="54" height="60" viewBox="0 0 54 60" stroke="#666" strokeWidth="3">
            <rect x="2" y="6" width="22.5" height="22.5" rx="3" />
            <rect x="2" y="33" width="22.5" height="22.5" rx="3" />
            <rect x="29.5" y="33" width="22.5" height="22.5" rx="3" />
            <rect x="31.8" y="8" width="17.5" height="17.5" rx="3" transform="rotate(45 40.5 16.75)" />
          </Icon>
          <ActionLabel>功能</ActionLabel>
        </Action>
        <Action>
          <Icon width="58" height="60" viewBox="0 0 58 60" stroke="#666" strokeWidth="2.8">
            <circle cx="29" cy="30" r="27" />
            <g fill="#666" stroke="none">
              <circle cx="17" cy="30" r="3.2" />
              <circle cx="29" cy="30" r="3.2" />
              <circle cx="41" cy="30" r="3.2" />
            </g>
          </Icon>
          <ActionLabel>设自选</ActionLabel>
        </Action>
      </BottomBar>
    </Page>
  );
}
